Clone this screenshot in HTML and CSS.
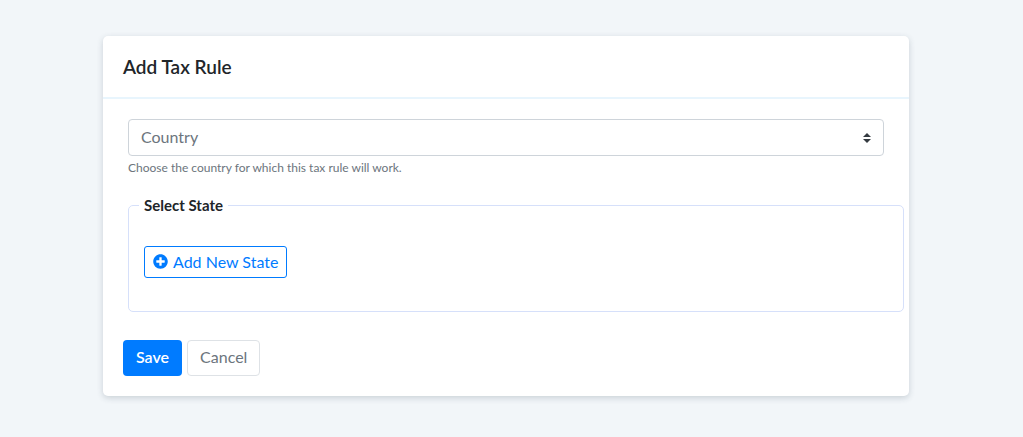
FILE: index.html
```html
<!DOCTYPE html>
<html lang="en">
<head>
    <meta charset="UTF-8">
    <meta name="viewport" content="width=device-width, initial-scale=1.0">
    <title>Add Tax Rule</title>
    <link rel="stylesheet" href="styles.css">
</head>
<body>
<main class="page">
    <form class="card">
        <div class="card-header">
            <h1 class="card-title">Add Tax Rule</h1>
        </div>
        <div class="card-body">
            <div class="form-group">
                <select class="custom-select" id="country" aria-label="Country" aria-describedby="countryHelp">
                    <option>Country</option>
                </select>
                <small class="form-text" id="countryHelp">Choose the country for which this tax rule will work.</small>
            </div>
            <fieldset class="states">
                <legend>Select State</legend>
                <div class="states-body">
                    <button type="button" class="btn btn-outline">
                        <svg class="icon" viewBox="0 0 512 512" aria-hidden="true">
                            <path fill="currentColor" d="M256 8C119 8 8 119 8 256s111 248 248 248 248-111 248-248S393 8 256 8zm144 276c0 6.600-5.400 12-12 12h-92v92c0 6.600-5.400 12-12 12h-56c-6.600 0-12-5.400-12-12v-92h-92c-6.600 0-12-5.400-12-12v-56c0-6.600 5.400-12 12-12h92v-92c0-6.600 5.400-12 12-12h56c6.600 0 12 5.400 12 12v92h92c6.600 0 12 5.400 12 12v56z"/>
                        </svg>
                        Add New State
                    </button>
                </div>
            </fieldset>
            <div class="actions">
                <button type="submit" class="btn btn-primary">Save</button>
                <button type="button" class="btn btn-light">Cancel</button>
            </div>
        </div>
    </form>
</main>
</body>
</html>
```
FILE: styles.css
```css
* {
    box-sizing: border-box;
}
body {
    margin: 0;
    background: #f2f6f9;
    color: #212529;
    font: 16px/24px Lato, "Liberation Sans", sans-serif;
}
.page {
    padding: 36px 114px 41px 103px;
}
.card {
    background: #fff;
    border-radius: 5px;
    box-shadow: 0 2px 6px rgba(40, 60, 80, .2);
}
.card-header {
    padding: 19px 20px 18px;
    border-bottom: 2px solid #e8f5fd;
}
.card-title {
    margin: 0;
    font-size: 19px;
    line-height: 24px;
    font-weight: 600;
}
.card-body {
    padding: 20px;
}
.form-group {
    padding: 0 5px;
    margin-bottom: 20px;
}
.custom-select {
    display: block;
    width: 100%;
    height: 37px;
    padding: 0 28px 2px 12px;
    border: 1px solid #ced4da;
    border-radius: 4px;
    color: #6c757d;
    font: inherit;
    appearance: none;
    background: #fff url("data:image/svg+xml,%3Csvg xmlns='http://www.w3.org/2000/svg' viewBox='0 0 4 5'%3E%3Cpath fill='%23343a40' d='M2 0L0 2h4zm0 5L0 3h4z'/%3E%3C/svg%3E") no-repeat right 12px center / 8px 10px;
}
.form-text {
    display: block;
    margin-top: 4px;
    color: #6c757d;
    font-size: 12px;
    line-height: 16px;
}
/* runs wider than the select above, up to the card edge */
.states {
    min-width: 0;
    margin: 0 -15px 28px 5px;
    padding: 0 10px;
    border: 1px solid #d6e0fa;
    border-radius: 5px;
}
.states legend {
    padding: 0 5px;
    font-size: 15px;
    line-height: 18px;
    font-weight: 700;
}
.states-body {
    padding: 32px 5px 33px;
}
.actions {
    display: flex;
    gap: 5px;
}
.btn {
    display: flex;
    align-items: center;
    height: 36px;
    padding: 0 12px 2px;
    border: 1px solid transparent;
    border-radius: 4px;
    background: #fff;
    font: inherit;
    cursor: pointer;
}
.btn-primary {
    background: #007bff;
    color: #fff;
    font-weight: 600;
}
.btn-light {
    border-color: #dee2e6;
    color: #6c757d;
}
.btn-outline {
    height: 32px;
    padding: 0 8px 1px;
    gap: 5px;
    border-color: #007bff;
    border-radius: 3px;
    color: #007bff;
}
.icon {
    width: 15px;
    height: 15px;
}
```
